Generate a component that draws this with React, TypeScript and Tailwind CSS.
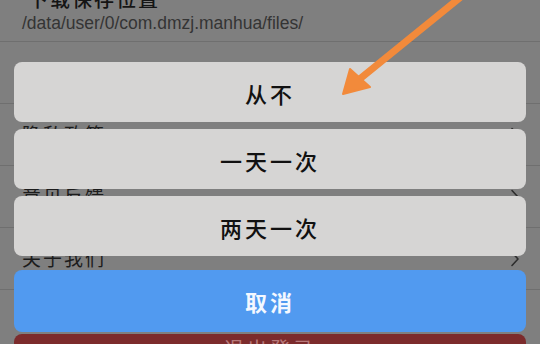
import React from "react";

const cjk = { fontFamily: '"Noto Sans CJK SC", "Noto Sans", sans-serif' };

const Chevron = () => (
  <svg width="10" height="16" viewBox="0 0 10 16" className="shrink-0">
    <path d="M2 1.5 L8 8 L2 14.5" fill="none" stroke="#2e2e2e" strokeWidth="1.6" strokeLinecap="round" strokeLinejoin="round" />
  </svg>
);

const Row = ({ label }: { label: string }) => (
  <div className="h-[62px] flex items-center justify-between pl-[22px] pr-[20px] border-b border-[#6f6f6f]">
    <span className="text-[19px] text-[#1c1c1c] tracking-[2px]" style={cjk}>{label}</span>
    <Chevron />
  </div>
);

const Option = ({ label }: { label: string }) => (
  <div className="h-[60px] rounded-[8px] bg-[#d6d5d4] flex items-center justify-center pt-[3px]">
    <span className="text-[22px] text-[#111] font-medium tracking-[3px]" style={cjk}>{label}</span>
  </div>
);

export default function App() {
  return (
    <div className="relative w-[540px] h-[344px] overflow-hidden bg-[#7f7f7f]">
      {/* settings page behind the dim */}
      <div className="flex flex-col">
        <div className="h-[62px] -mt-[20px] flex flex-col justify-end pl-[22px] pb-[8px] border-b border-[#6f6f6f]">
          <span className="text-[20px] leading-[24px] text-[#151515] font-medium tracking-[2px] pl-[6px]" style={cjk}>下载保存位置</span>
          <span className="text-[17.5px] leading-[20px] text-[#343434] mt-[2px]" style={{ fontFamily: '"Liberation Sans", sans-serif' }}>
            /data/user/0/com.dmzj.manhua/files/
          </span>
        </div>
        <Row label="下载设置" />
        <Row label="隐私政策" />
        <Row label="意见反馈" />
        <Row label="关于我们" />
        <div className="h-[44px]" />
        <div className="mx-[14px] h-[40px] rounded-[8px] bg-[#7c2b2c] flex justify-center pt-[3px]">
          <span className="text-[20px] leading-[24px] text-[#b8797a] tracking-[3px]" style={cjk}>退出登录</span>
        </div>
      </div>

      {/* bottom sheet */}
      <div className="absolute inset-0 flex flex-col px-[14px] pt-[62px]">
        <div className="flex flex-col gap-[7px]">
          <Option label="从不" />
          <Option label="一天一次" />
          <Option label="两天一次" />
        </div>
        <div className="mt-[14px] h-[62px] rounded-[8px] bg-[#519af0] flex items-center justify-center">
          <span className="text-[22px] text-[#f4f8ff] font-bold tracking-[3px]" style={cjk}>取消</span>
        </div>
      </div>

      {/* annotation arrow */}
      <svg className="absolute inset-0 pointer-events-none" width="540" height="344" viewBox="0 0 540 344">
        <line x1="462" y1="-4" x2="356" y2="82" stroke="#f28a3b" strokeWidth="7" strokeLinecap="round" />
        <polygon points="343,94 350,69 370,87" fill="#f28a3b" strokeLinejoin="round" stroke="#f28a3b" strokeWidth="2" />
      </svg>
    </div>
  );
}
